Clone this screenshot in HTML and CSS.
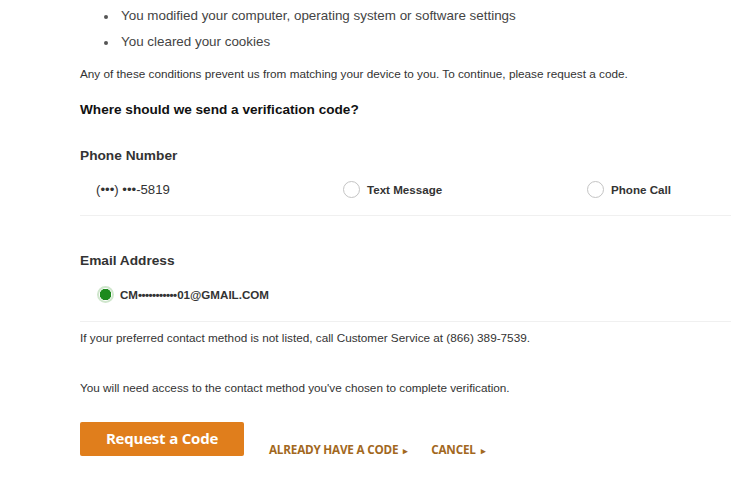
FILE: index.html
```html
<!DOCTYPE html>
<html lang="en">
<head>
<meta charset="utf-8">
<title>Verification</title>
<link rel="stylesheet" href="styles.css">
</head>
<body>
<main class="page">
  <ul class="reasons">
    <li>You modified your computer, operating system or software settings</li>
    <li>You cleared your cookies</li>
  </ul>
  <p class="intro">Any of these conditions prevent us from matching your device to you. To continue, please request a code.</p>
  <h2 class="question">Where should we send a verification code?</h2>

  <section class="group">
    <h3 class="group-label">Phone Number</h3>
    <div class="option-row phone-row">
      <span class="value phone">(&bull;&bull;&bull;) &bull;&bull;&bull;-5819</span>
      <label class="choice choice-text"><span class="radio"></span>Text Message</label>
      <label class="choice choice-call"><span class="radio"></span>Phone Call</label>
    </div>
  </section>

  <section class="group group-email">
    <h3 class="group-label">Email Address</h3>
    <div class="option-row email-row">
      <label class="choice choice-email"><span class="radio checked"></span>CM<span class="mask">&bull;&bull;&bull;&bull;&bull;&bull;&bull;&bull;&bull;&bull;&bull;</span>01@GMAIL.COM</label>
    </div>
  </section>

  <p class="note note-service">If your preferred contact method is not listed, call Customer Service at (866) 389-7539.</p>
  <p class="note note-access">You will need access to the contact method you've chosen to complete verification.</p>

  <div class="actions">
    <button class="btn-primary" type="button">Request a Code</button>
    <a class="link" href="#">ALREADY HAVE A CODE<span class="caret">&#9656;</span></a>
    <a class="link" href="#">CANCEL<span class="caret">&#9656;</span></a>
  </div>
</main>
</body>
</html>
```
FILE: styles.css
```css
html, body {
  margin: 0;
  padding: 0;
  background: #ffffff;
}
body {
  font-family: "Liberation Sans", Arial, sans-serif;
  color: #333;
}
.page {
  padding-left: 80px;
}
.reasons {
  margin: 0;
  padding: 3px 0 0 41px;
  list-style: none;
}
.reasons li {
  position: relative;
  font-size: 13.4px;
  line-height: 26px;
  color: #444;
}
.reasons li::before {
  content: "";
  position: absolute;
  left: -17px;
  top: 12px;
  width: 4px;
  height: 4px;
  border-radius: 50%;
  background: #555;
}
.intro {
  margin: 11px 0 0;
  font-size: 11.75px;
  line-height: 16px;
  color: #333;
}
.question {
  margin: 19px 0 0;
  font-size: 13.6px;
  line-height: 18px;
  font-weight: bold;
  color: #111;
}
.group {
  margin-top: 28px;
}
.group-email {
  margin-top: 36px;
}
.group-label {
  margin: 0;
  font-size: 13.7px;
  line-height: 18px;
  font-weight: bold;
  color: #333;
}
.option-row {
  display: flex;
  align-items: center;
  height: 26px;
  border-bottom: 1px solid #f0f0f0;
}
.phone-row {
  margin-top: 11px;
  padding-bottom: 13px;
}
.email-row {
  margin-top: 11px;
  padding-bottom: 14px;
}
.value {
  font-size: 13.2px;
  color: #333;
}
.phone {
  margin-left: 16px;
  width: 247px;
}
.choice {
  display: flex;
  align-items: center;
  font-size: 11.6px;
  font-weight: bold;
  color: #333;
}
.choice-text {
  width: 244px;
}
.choice-email {
  margin-left: 17px;
}
.mask {
  letter-spacing: -0.55px;
  margin-right: 0.5px;
}
.radio {
  box-sizing: border-box;
  width: 17px;
  height: 17px;
  border-radius: 50%;
  border: 1.5px solid #c4c4c4;
  background: #fff;
  margin-right: 7px;
}
.radio.checked {
  border: 2px solid #cfe6cc;
  background: radial-gradient(circle, #1d8a1d 0 5.5px, #ffffff 6px);
  margin-right: 6px;
}
.note {
  margin: 0;
  font-size: 11.75px;
  line-height: 16px;
  color: #333;
}
.note-service {
  margin-top: 8px;
}
.note-access {
  margin-top: 34px;
}
.actions {
  display: flex;
  align-items: flex-end;
  margin-top: 26px;
}
.btn-primary {
  width: 164px;
  height: 34px;
  border: none;
  border-radius: 2px;
  background: #e07e1c;
  color: #fff;
  font-family: "Open Sans", "Noto Sans", sans-serif;
  font-weight: bold;
  font-size: 15px;
  letter-spacing: -0.2px;
  padding: 0 0 2px;
  cursor: pointer;
}
.link {
  font-family: "Open Sans", "Noto Sans", sans-serif;
  font-weight: bold;
  font-size: 11.7px;
  color: #a2681e;
  text-decoration: none;
  letter-spacing: -0.2px;
  margin-left: 25px;
  line-height: 14px;
  margin-bottom: -2px;
}
.link + .link {
  margin-left: 23px;
}
.caret {
  font-size: 9px;
  margin-left: 5px;
}
```
